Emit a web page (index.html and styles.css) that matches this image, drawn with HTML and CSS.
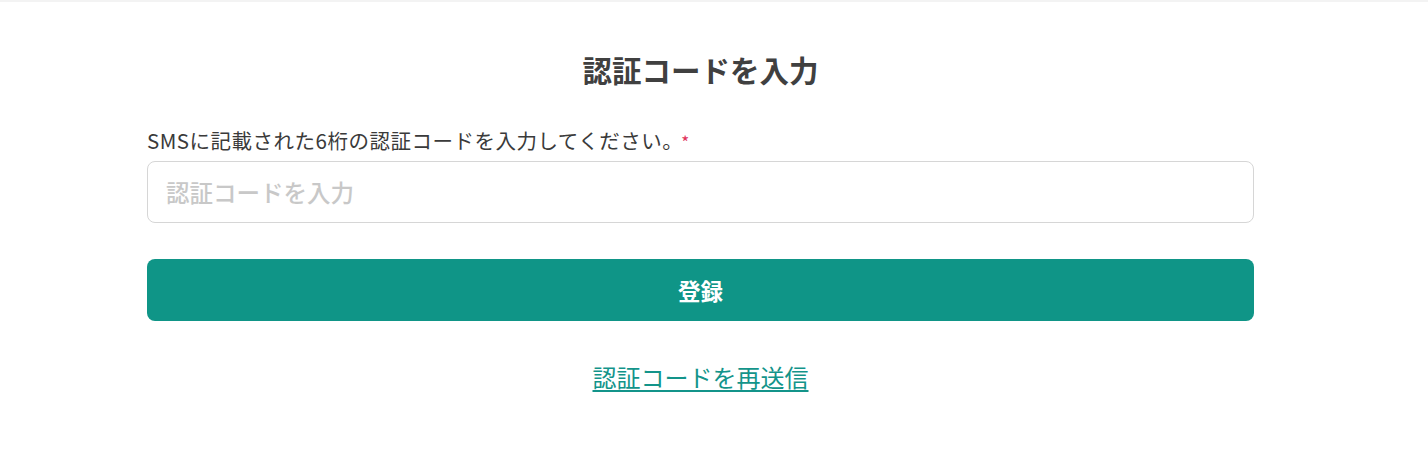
FILE: index.html
```html
<!DOCTYPE html>
<html lang="ja">
<head>
<meta charset="utf-8">
<title>認証コードを入力</title>
<link rel="stylesheet" href="styles.css">
</head>
<body>
<div class="topbar"></div>
<main class="page">
  <h1 class="title">認証コードを入力</h1>
  <form class="form">
    <label class="label" for="code">SMSに記載された6桁の認証コードを入力してください。<span class="req">*</span></label>
    <input class="input" id="code" type="text" placeholder="認証コードを入力">
    <button class="btn" type="button">登録</button>
    <a class="link" href="#">認証コードを再送信</a>
  </form>
</main>
</body>
</html>
```
FILE: styles.css
```css
html, body {
  margin: 0;
  padding: 0;
  background: #ffffff;
}
body {
  font-family: "Noto Sans CJK JP", "Noto Sans", sans-serif;
  color: #3a3a3a;
}
.topbar {
  height: 2px;
  background: #f3f3f3;
}
.page {
  width: 1107px;
  margin-left: 147px;
  padding-top: 47px;
  display: flex;
  flex-direction: column;
}
.title {
  margin: 0;
  font-size: 29.5px;
  line-height: 40px;
  font-weight: 700;
  text-align: center;
  color: #404040;
}
.form {
  display: flex;
  flex-direction: column;
  margin-top: 37px;
}
.label {
  font-size: 20.5px;
  line-height: 28px;
  height: 28px;
  color: #3a3a3a;
  letter-spacing: 0.5px;
}
.req {
  color: #e0325a;
  margin-left: -2px;
  font-size: 17px;
  line-height: 1;
}
.input {
  margin-top: 7px;
  height: 62px;
  box-sizing: border-box;
  border: 1px solid #d6d6d6;
  border-radius: 8px;
  padding: 0 18px;
  font-family: "Noto Sans CJK JP", "Noto Sans", sans-serif;
  font-size: 23.5px;
  font-weight: 500;
  color: #3a3a3a;
  outline: none;
}
.input::placeholder {
  color: #c8c8c8;
}
.btn {
  margin-top: 36px;
  height: 62px;
  border: none;
  border-radius: 8px;
  background: #0f9587;
  color: #ffffff;
  font-family: "Noto Sans CJK JP", "Noto Sans", sans-serif;
  font-size: 22.5px;
  font-weight: 700;
  cursor: pointer;
}
.link {
  align-self: center;
  margin-top: 40px;
  font-size: 24px;
  line-height: 32px;
  color: #13948a;
  text-decoration: underline;
  text-underline-offset: 3px;
  text-decoration-thickness: 1.5px;
}
```
